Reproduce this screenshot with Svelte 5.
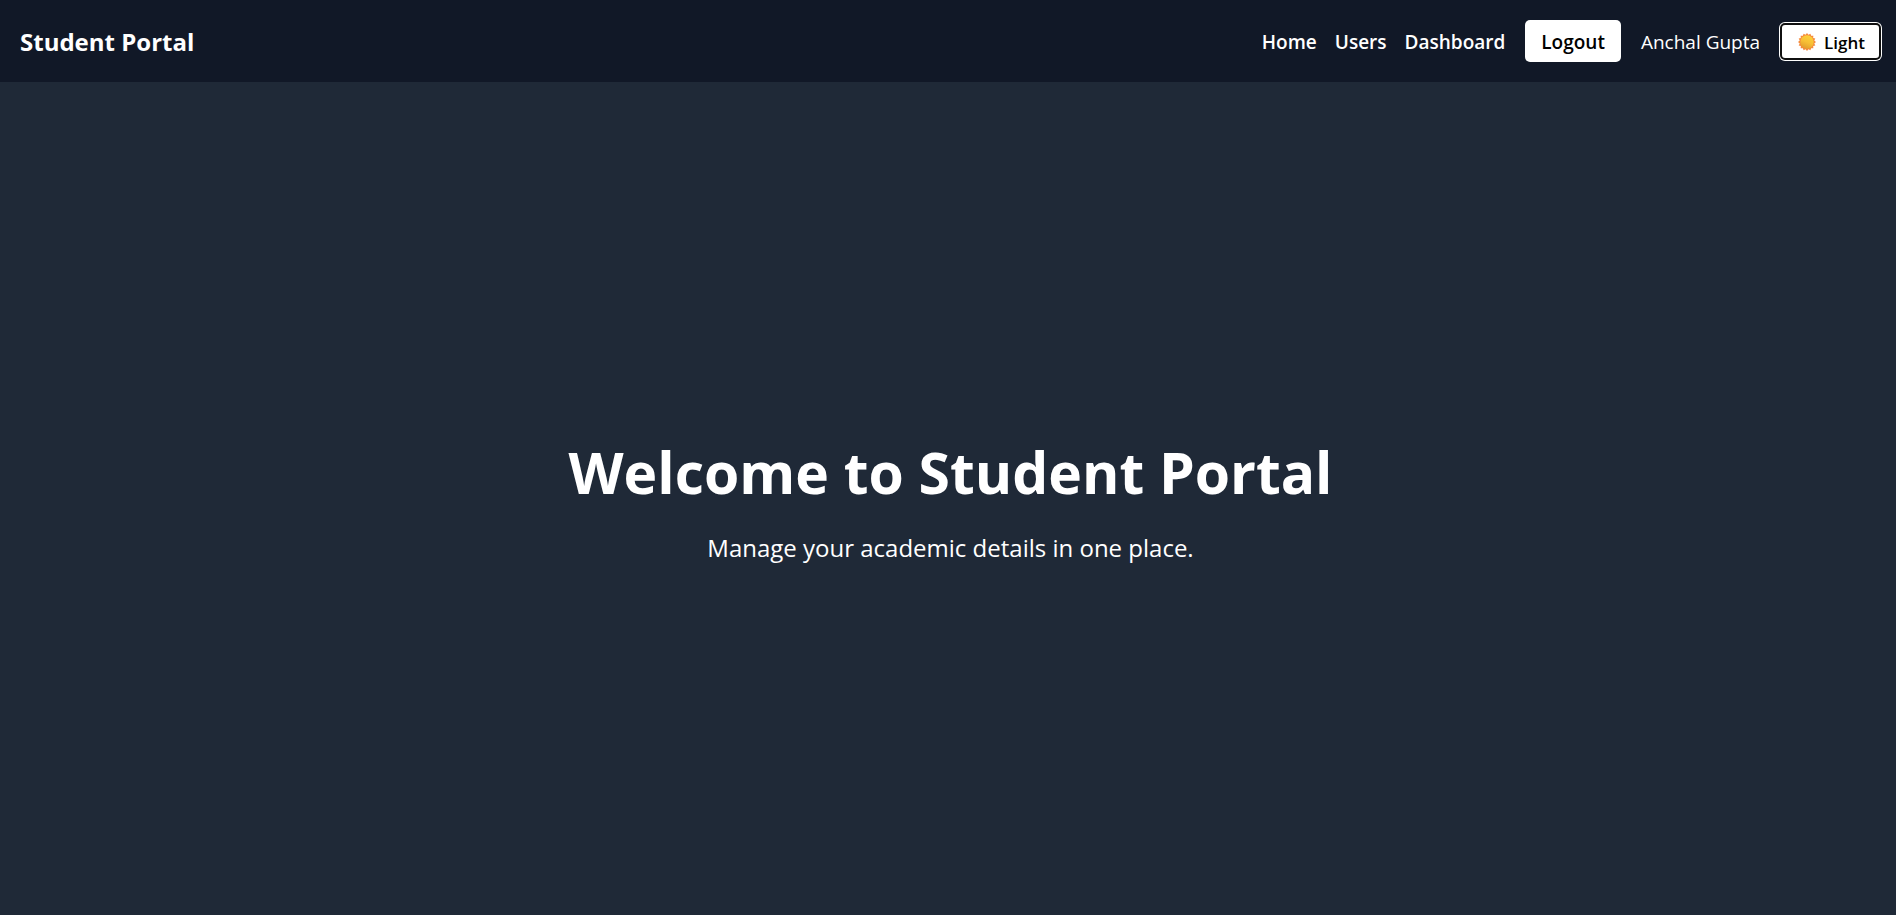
<script>
  const links = ['Home', 'Users', 'Dashboard'];

  // Short pointed rays around the sun disc
  const rays = 16;
  const rim = Array.from({ length: rays * 2 }, (_, i) => {
    const angle = (i * Math.PI) / rays - Math.PI / 2;
    const radius = i % 2 ? 7.4 : 9;
    return `${(9 + radius * Math.cos(angle)).toFixed(2)},${(9 + radius * Math.sin(angle)).toFixed(2)}`;
  }).join(' ');
</script>

<div class="page">
  <header>
    <a class="brand" href="#home">Student Portal</a>
    <nav>
      <div class="links">
        {#each links as link}
          <a href={'#' + link.toLowerCase()}>{link}</a>
        {/each}
      </div>
      <button class="logout" type="button">Logout</button>
      <span class="user">Anchal Gupta</span>
      <button class="theme" type="button">
        <svg viewBox="0 0 18 18" aria-hidden="true">
          <defs>
            <linearGradient id="sun" x1="0.7" y1="0" x2="0.3" y2="1">
              <stop offset="0" stop-color="#fdd23a" />
              <stop offset="0.5" stop-color="#f7c035" />
              <stop offset="1" stop-color="#e19a2c" />
            </linearGradient>
          </defs>
          <polygon points={rim} fill="#f58a3c" />
          <circle cx="9" cy="9" r="6.7" fill="url(#sun)" />
        </svg>
        Light
      </button>
    </nav>
  </header>
  <main>
    <h1>Welcome to Student Portal</h1>
    <p>Manage your academic details in one place.</p>
  </main>
</div>

<style>
  :global(body) {
    margin: 0;
  }
  .page {
    min-height: 100vh;
    display: flex;
    flex-direction: column;
    background: #1f2937;
    color: #fff;
    font-family: 'Segoe UI', 'Open Sans', 'Noto Sans', sans-serif;
  }
  header {
    display: flex;
    align-items: center;
    justify-content: space-between;
    padding: 20px 15px 20px 20px;
    background: #111827;
  }
  a {
    color: inherit;
    text-decoration: none;
  }
  .brand {
    padding-top: 2px;
    font-size: 24px;
    line-height: 32px;
    font-weight: 700;
  }
  nav {
    display: flex;
    align-items: center;
    gap: 20px;
    font-size: 19px;
    line-height: 32px;
  }
  .links {
    display: flex;
    gap: 18px;
  }
  .links,
  .user {
    padding-top: 2px;
  }
  .links,
  button {
    font-weight: 600;
  }
  button {
    border: 0;
    border-radius: 5px;
    background: #fff;
    color: #000;
    font-family: inherit;
  }
  .logout {
    padding: 6px 16px 4px;
    font-size: 19px;
    line-height: 32px;
  }
  .theme {
    display: flex;
    align-items: center;
    gap: 8px;
    padding: 5px 14px 3px 16px;
    border: 2px solid #101010;
    font-size: 17px;
    line-height: 25px;
    box-shadow: 0 0 0 1px #fff;
  }
  .theme svg {
    width: 18px;
    height: 18px;
  }
  main {
    flex: 1;
    display: flex;
    flex-direction: column;
    align-items: center;
    justify-content: center;
    padding: 4px 0 0 5px;
    text-align: center;
  }
  h1 {
    margin: 0 0 20px;
    font-size: 57px;
    line-height: 75px;
    font-weight: 700;
  }
  p {
    margin: 0;
    font-size: 24px;
    line-height: 36px;
  }
</style>
